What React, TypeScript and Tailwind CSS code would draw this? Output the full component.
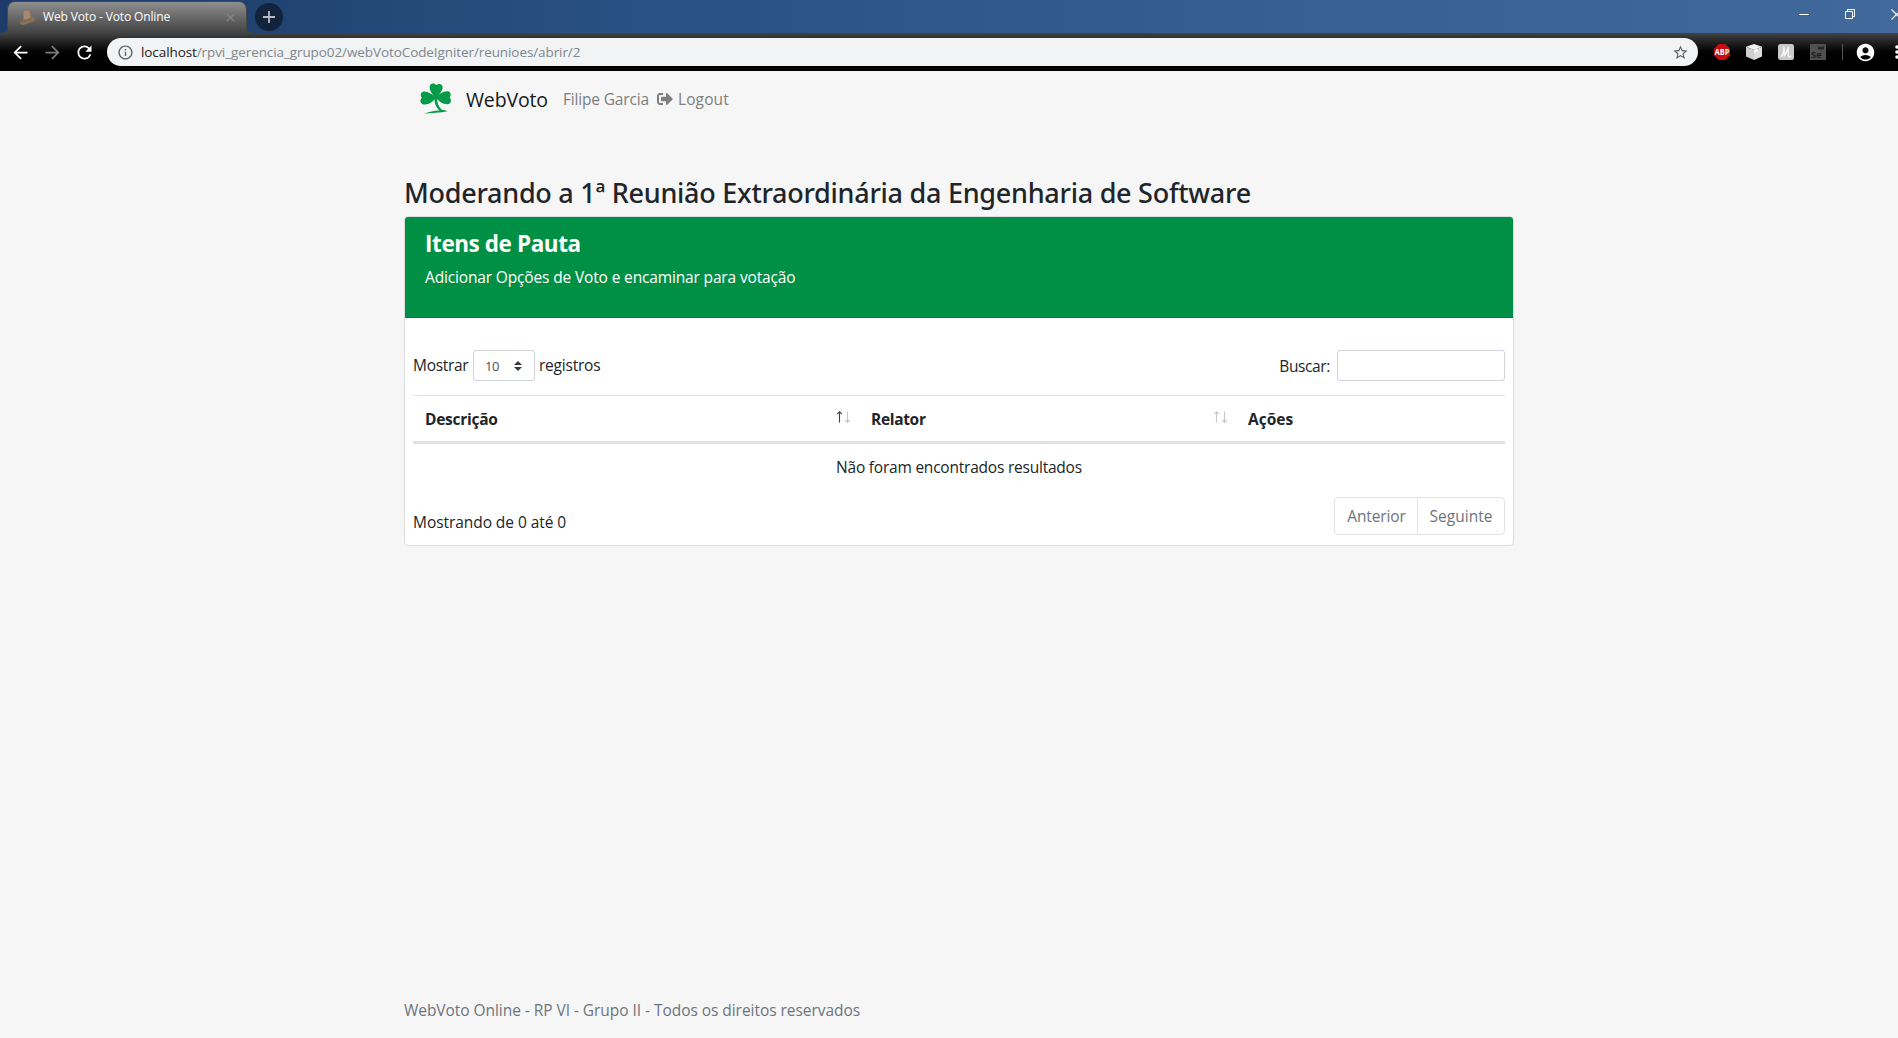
import { FaSignOutAlt } from "react-icons/fa";
import { MdAccountCircle, MdArrowBack, MdArrowForward, MdInfoOutline, MdRefresh, MdStarBorder } from "react-icons/md";

function HatIcon() {
  return (
    <svg width="17" height="17" viewBox="0 0 17 17" className="shrink-0">
      <path d="M4.2 2 Q7 0 11 1.6 L12.2 7.6 L15.8 9.4 Q16.4 12 13 13 L4 16 Q0.6 15.8 0.8 12.4 L4.4 10.4 Z" fill="#8b725c" />
      <path d="M4.6 2.2 Q8 0.6 10.6 2.2 L11.4 8.2 Q8.4 10.8 4.8 9.8 Z" fill="#a58a70" />
      <path d="M1.5 12.8 Q8 12.8 12.5 9.8" stroke="#7a6250" fill="none" />
    </svg>
  );
}

function CloverIcon() {
  return (
    <svg width="32" height="32" viewBox="0 0 32 32" className="shrink-0">
      <g fill="#059b48">
        <path d="M16 15 C13.4 12.6 8.6 7.4 9.8 3 C10.6 0.2 14 -0.2 16.2 2 C18.6 0 22.4 0.8 22.6 4 C22.8 8 18.6 12 16 15 Z" />
        <path d="M16.2 14.2 C12.4 11.4 6 7.2 2.4 9 C0.2 10.4 0.4 13.2 2 14.8 C-0.2 16.6 -0.2 20.2 2.6 21.2 C8 22.4 13 19 16.2 14.2 Z" />
        <path d="M15.8 14.2 C19.4 10.8 24.6 7 28.8 8.6 C31.2 9.8 31.2 12.8 29.6 14.6 C31.6 16.6 31.6 20 28.6 21 C23.8 22 19 18.6 15.8 14.2 Z" />
        <path d="M14.6 14.4 C14 19.6 16.2 24.6 19.4 27.4 C14 27.6 9 28.8 4 30.4 C12 30 20 29.6 27.4 28.2 C25 27 23.2 26.9 22 27 C18.4 24 16.9 19.4 17.1 14.6 Z" />
      </g>
    </svg>
  );
}

function SortArrows({ active = false }: { active?: boolean }) {
  return (
    <svg width="14" height="12" viewBox="0 0 14 12" fill="none" className="mb-[5px] shrink-0">
      <path d="M2.5 11.5 V1 M0.2 3 L2.5 0.8 L4.8 3" stroke={active ? "#3c4146" : "#c4c6c8"} strokeWidth="1.1" />
      <path d="M10.5 0.5 V11 M8.2 9 L10.5 11.2 L12.8 9" stroke="#c4c6c8" strokeWidth="1.1" />
    </svg>
  );
}

function WindowButtons() {
  return (
    <div className="flex h-7 items-center text-white">
      <svg width="10" height="11" className="mr-[36px]"><path d="M0 5.5H10" stroke="currentColor" /></svg>
      <svg width="11" height="11" fill="none" className="mr-[35px]">
        <path d="M0.5 2.5H7.5V9.5H0.5Z M2.5 2.5V0.5H9.5V7.5H7.5" stroke="currentColor" />
      </svg>
      <svg width="7" height="11" fill="none"><path d="M0.5 0.5L10.5 10.5M10.5 0.5L0.5 10.5" stroke="currentColor" strokeWidth="1.1" /></svg>
    </div>
  );
}

function BrowserChrome() {
  return (
    <header className="h-[71px] bg-black">
      <div className="flex h-[33px] justify-between bg-[linear-gradient(90deg,#1d3c6c_0px,#20426f_250px,#254a7a_420px,#2b5587_800px,#355f92_1250px,#41699b_1898px)]">
        <div className="flex">
          <div className="relative ml-[7px] mt-px flex h-8 w-[240px] items-center rounded-t-lg border border-b-0 border-[#45494e] bg-linear-to-b from-[#8f8f8f] to-[#434343] pl-[11px]">
            <svg width="8" height="8" className="absolute -left-2 bottom-0"><path d="M8 0V8H0Q8 8 8 0Z" fill="#434343" /></svg>
            <svg width="8" height="8" className="absolute -right-2 bottom-0"><path d="M0 0V8H8Q0 8 0 0Z" fill="#434343" /></svg>
            <HatIcon />
            <span className="ml-[7px] flex-1 whitespace-nowrap pb-0.5 text-xs tracking-[-0.14px] text-white">Web Voto - Voto Online</span>
            <svg width="9" height="9" className="mr-[11px]"><path d="M0.7 0.7L8.3 8.3M8.3 0.7L0.7 8.3" stroke="#858585" strokeWidth="1.4" /></svg>
          </div>
          <div className="ml-2 mt-[3px] flex size-7 items-center justify-center rounded-full bg-[#12233c]">
            <svg width="12" height="12"><path d="M6 0V12M0 6H12" stroke="#b9bcc0" strokeWidth="1.8" /></svg>
          </div>
        </div>
        <WindowButtons />
      </div>
      <div className="flex h-[38px] items-center bg-linear-to-b from-[#434343] to-black to-70%">
        <MdArrowBack size={21} className="ml-[10px] shrink-0 text-white" />
        <MdArrowForward size={21} className="ml-[11px] shrink-0 text-[#7c7c7c]" />
        <MdRefresh size={21} className="ml-[11px] shrink-0 text-white" />
        <div className="ml-[12px] flex h-7 w-[1591px] shrink-0 items-center rounded-full bg-[#f1f3f4] pl-[10px] pr-[9px]">
          <MdInfoOutline size={17} className="text-[#5f6368]" />
          <span className="ml-[7px] flex-1 whitespace-nowrap text-[13.5px] tracking-[-0.09px] text-[#7f868c]">
            <span className="text-[#202124]">localhost</span>/rpvi_gerencia_grupo02/webVotoCodeIgniter/reunioes/abrir/2
          </span>
          <MdStarBorder size={17} className="text-[#5f6368]" />
        </div>
        <div className="ml-4 flex shrink-0 items-center gap-4">
          <svg width="16" height="16" viewBox="0 0 16 16">
            <path d="M4.7 0H11.3L16 4.7V11.3L11.3 16H4.7L0 11.3V4.7Z" fill="#c70d0f" />
            <text x="8" y="11" textAnchor="middle" fontSize="8.4" fontWeight="bold" fill="#fff" textLength="14.4" lengthAdjust="spacingAndGlyphs">ABP</text>
          </svg>
          <svg width="16" height="16" viewBox="0 0 16 16">
            <path d="M8 0L16 2.8L8 6L0 2.8Z" fill="#f0f0f0" />
            <path d="M0 2.8L8 6V16L0 12.6Z" fill="#cfcfcf" />
            <path d="M16 2.8L8 6V16L16 12.6Z" fill="#dedede" />
            <path d="M8 6L11.5 4.6V7.6L8 9Z" fill="#f7f7f7" />
          </svg>
          <svg width="16" height="16" viewBox="0 0 16 16" fill="none">
            <rect width="16" height="16" rx="2.5" fill="#c9c9c9" />
            <path d="M3 13Q6 9 6 3Q6.6 8 6.2 12Q8.4 9 10.4 3.6Q10 8 10.4 12.4Q12 13.4 13.4 11.6" stroke="#f5f5f5" strokeWidth="1.5" strokeLinejoin="round" />
          </svg>
          <svg width="16" height="16" viewBox="0 0 16 16">
            <rect width="16" height="16" fill="#505050" />
            <path d="M8 2.5H10L11 3.2L14 2V5.5H8Z" fill="#272727" />
            <text x="1" y="14.2" fontSize="9.5" fontWeight="bold" fill="#1c1c1c">Se</text>
          </svg>
        </div>
        <div className="ml-4 h-4 w-px shrink-0 bg-[#555]" />
        <MdAccountCircle size={21} className="ml-3 shrink-0 text-white" />
        <svg width="3" height="16" className="ml-[19px] shrink-0" fill="#fff">
          <circle cx="2" cy="3" r="1.8" /><circle cx="2" cy="8" r="1.8" /><circle cx="2" cy="13" r="1.8" />
        </svg>
      </div>
    </header>
  );
}

function Navbar() {
  return (
    <nav className="flex h-14 items-center pb-1 pl-[16px] text-[#7e7e7e]">
      <div className="flex h-12 items-center pt-[3px]"><CloverIcon /></div>
      <span className="ml-[14px] w-[97px] pt-1.5 text-[19.5px] tracking-[-0.15px] text-[#181818]">WebVoto</span>
      <span className="w-[94px] whitespace-nowrap pt-[4px] tracking-[-0.17px]">Filipe Garcia</span>
      <FaSignOutAlt size={16} className="mt-1" />
      <span className="ml-[5px] pt-[4px] tracking-[0.1px]">Logout</span>
    </nav>
  );
}

function AgendaCard() {
  return (
    <section className="flex h-[330px] flex-col rounded border border-[#dcdddf] bg-white">
      <div className="h-[101px] shrink-0 rounded-t-[3px] border-b border-[#037c3c] bg-[#009045] pl-5 pt-[13px] text-white">
        <h4 className="text-[22.5px] leading-7 font-bold tracking-[-0.42px]">Itens de Pauta</h4>
        <p className="mt-[7px] leading-6 tracking-[-0.15px]">Adicionar Opções de Voto e encaminar para votação</p>
      </div>
      <div className="flex flex-col px-2 pt-8">
        <div className="flex h-[31px] items-center justify-between">
          <div className="flex items-center">
            <span className="w-[60px] pb-[2px] tracking-[-0.3px]">Mostrar</span>
            <div className="flex h-[31px] w-[62px] items-center justify-between rounded-[3px] border border-[#ced4da] pl-[11px] pr-[12px] text-[13px] tracking-[-0.4px] text-[#495057]">
              <span>10</span>
              <svg width="8" height="10" viewBox="0 0 8 10" fill="#343a40"><path d="M4 0L8 4H0ZM4 10L0 6H8Z" /></svg>
            </div>
            <span className="ml-1 pb-[2px] tracking-[-0.22px]">registros</span>
          </div>
          <div className="flex items-center">
            <span className="mr-[7px] tracking-[-0.38px]">Buscar:</span>
            <div className="h-[31px] w-[168px] rounded-[3px] border border-[#ced4da]" />
          </div>
        </div>
        <div className="mt-[14px] grid h-[49px] grid-cols-[446px_377px_1fr] items-center border-t border-b-[3px] border-[#dee2e6] pt-px font-bold">
          <div className="flex items-center justify-between pl-3 pr-[8px] tracking-[-0.27px]">Descrição<SortArrows active /></div>
          <div className="flex items-center justify-between pl-3 pr-[8px] tracking-[-0.32px]">Relator<SortArrows /></div>
          <div className="pl-3">Ações</div>
        </div>
        <div className="flex h-[47px] items-center justify-center pb-px tracking-[-0.22px]">Não foram encontrados resultados</div>
        <div className="mt-[6px] flex h-[38px] items-center justify-between">
          <span className="pt-[11px] tracking-[-0.06px]">Mostrando de 0 até 0</span>
          <div className="flex h-[38px] w-[171px] rounded border border-[#dee2e6] text-[#6c757d]">
            <span className="flex w-[83px] items-center justify-center border-r border-[#dee2e6] pl-px tracking-[-0.12px]">Anterior</span>
            <span className="flex flex-1 items-center justify-center">Seguinte</span>
          </div>
        </div>
      </div>
    </section>
  );
}

export default function App() {
  return (
    <div className="flex h-[1038px] w-full flex-col overflow-hidden bg-[#f6f6f6] font-['Open_Sans','Noto_Sans',sans-serif] text-[15.5px] leading-6 text-[#212529]">
      <BrowserChrome />
      <main className="ml-[404px] flex w-[1110px] flex-1 flex-col">
        <Navbar />
        <h2 className="mt-[49px] mb-[6px] h-[34px] whitespace-nowrap font-['Noto_Sans'] text-[27px] leading-[34px] font-medium tracking-[-0.27px]">
          Moderando a 1ª Reunião Extraordinária da Engenharia de Software
        </h2>
        <AgendaCard />
        <footer className="mt-auto mb-4 tracking-[-0.05px] text-[#6c757d]">
          WebVoto Online - RP VI - Grupo II - Todos os direitos reservados
        </footer>
      </main>
    </div>
  );
}
